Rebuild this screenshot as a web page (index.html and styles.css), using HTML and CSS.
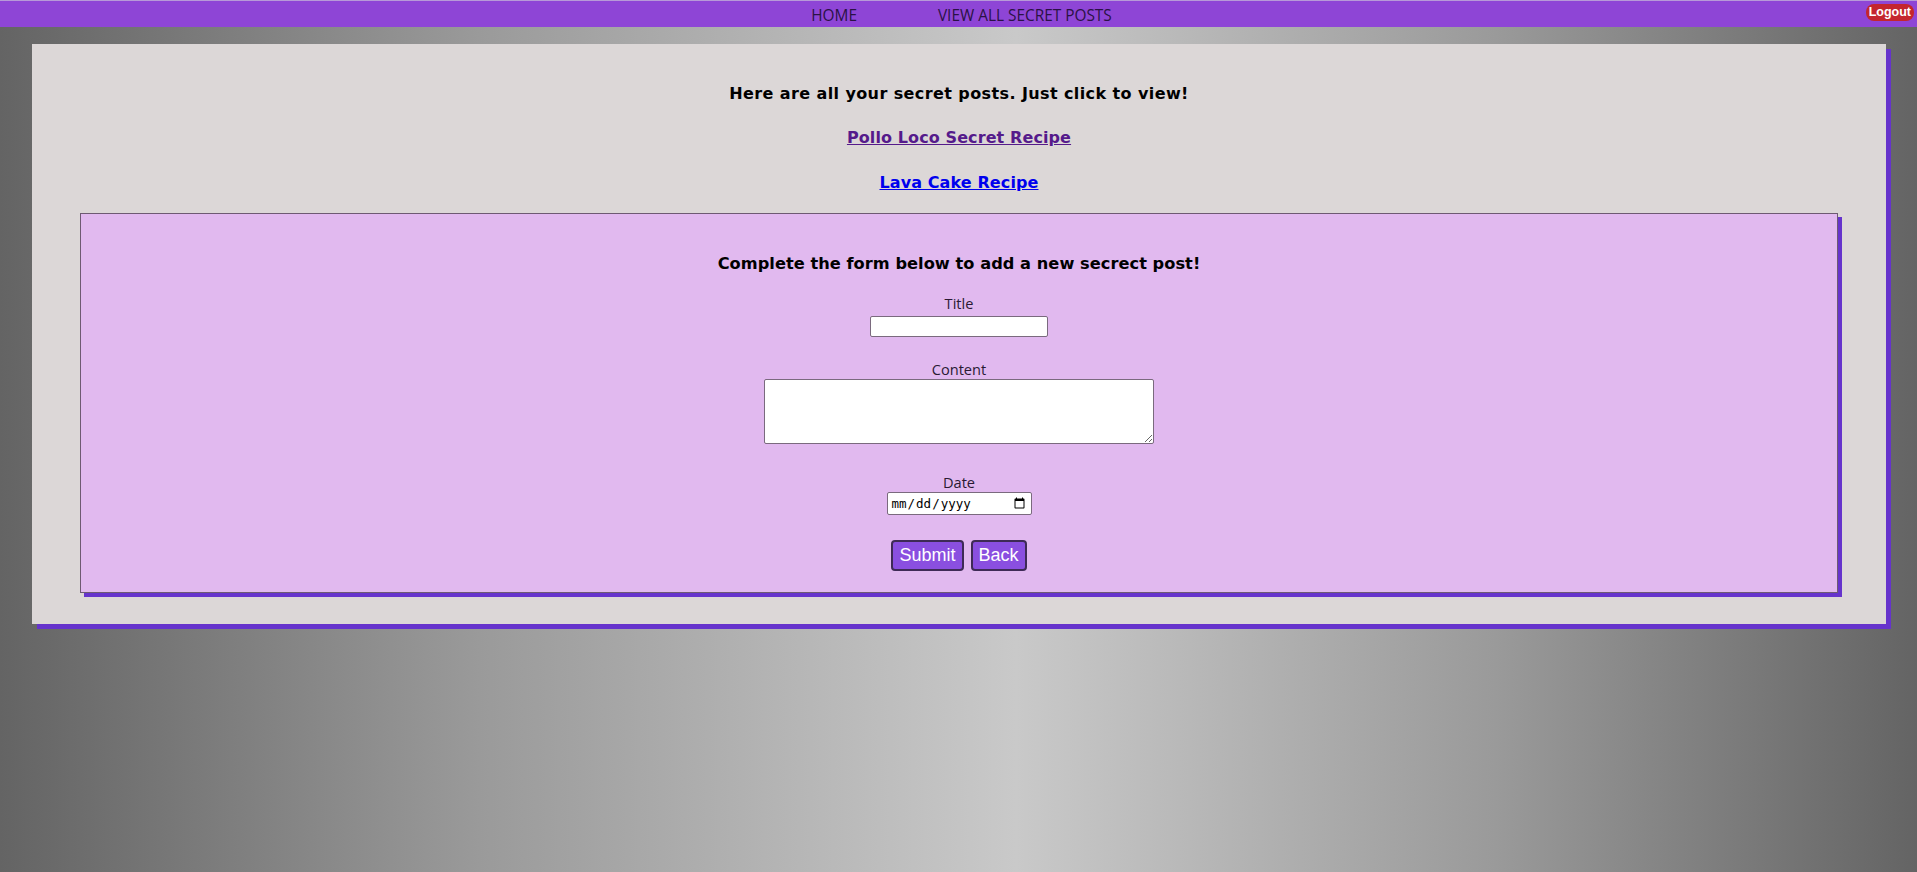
FILE: index.html
```html
<!DOCTYPE html>
<html lang="en">
<head>
<meta charset="utf-8">
<title>Secret Posts</title>
<link rel="stylesheet" href="styles.css">
</head>
<body>
<header class="topbar">
  <nav class="nav">
    <a class="nav-link" href="#">HOME</a>
    <a class="nav-link" href="#">VIEW ALL SECRET POSTS</a>
  </nav>
  <button class="logout" type="button">Logout</button>
</header>
<main class="card">
  <p class="heading">Here are all your secret posts. Just click to view!</p>
  <a class="post-link visited" href="#">Pollo Loco Secret Recipe</a>
  <a class="post-link" href="#">Lava Cake Recipe</a>
  <section class="form-box">
    <p class="heading form-heading">Complete the form below to add a new secrect post!</p>
    <form class="post-form">
      <label class="label label-title" for="title">Title</label>
      <input class="field title-field" id="title" type="text">
      <label class="label label-content" for="content">Content</label>
      <textarea class="field content-field" id="content"></textarea>
      <label class="label label-date" for="date">Date</label>
      <input class="field date-field" id="date" type="date">
      <div class="actions">
        <button class="btn" type="submit">Submit</button>
        <button class="btn" type="button">Back</button>
      </div>
    </form>
  </section>
</main>
</body>
</html>
```
FILE: styles.css
```css
html, body {
  margin: 0;
  padding: 0;
}
body {
  min-height: 872px;
  background: linear-gradient(to right, #646464 0%, #9a9a9a 25%, #c9c9c9 53%, #9a9a9a 78%, #646464 100%);
  font-family: "Open Sans", "Noto Sans", sans-serif;
}
.topbar {
  position: relative;
  height: 26px;
  background: #8e45d6;
  border-top: 1px solid #b79ad8;
}
.nav {
  display: flex;
  justify-content: center;
  align-items: center;
  gap: 81px;
  height: 26px;
  padding-left: 6px;
}
.nav-link {
  color: #2a1245;
  text-decoration: none;
  font-size: 15.4px;
  line-height: 26px;
  padding-top: 3px;
}
.logout {
  position: absolute;
  top: 3px;
  right: 3px;
  height: 17px;
  padding: 0 3px;
  border: none;
  border-radius: 8px;
  background: #c4262e;
  color: #ffffff;
  font-family: "Liberation Sans", Arial, sans-serif;
  font-weight: bold;
  font-size: 12.5px;
  line-height: 17px;
}
.card {
  display: flex;
  flex-direction: column;
  align-items: center;
  margin: 17px 31px 0 32px;
  padding: 40px 48px 31px;
  background: #dcd7d7;
  box-shadow: 5px 5px 0 #6633cc;
}
.heading {
  margin: 0;
  font-family: "DejaVu Sans", sans-serif;
  font-weight: bold;
  font-size: 16px;
  letter-spacing: 0.4px;
  line-height: 20px;
  color: #000000;
  text-align: center;
}
.post-link {
  margin-top: 24px;
  font-family: "DejaVu Sans", sans-serif;
  font-weight: bold;
  font-size: 16px;
  letter-spacing: 0.1px;
  line-height: 20px;
  color: #0000ee;
  text-decoration: underline;
}
.post-link + .post-link {
  margin-top: 25px;
}
.post-link.visited {
  color: #551a8b;
}
.form-box {
  align-self: stretch;
  margin-top: 20px;
  padding: 40px 0 21px;
  background: #e1b9ef;
  border: 1px solid #6e5a72;
  box-shadow: 4px 4px 0 #6633cc;
}
.form-heading {
  font-size: 16.2px;
  letter-spacing: 0.05px;
}
.post-form {
  display: flex;
  flex-direction: column;
  align-items: center;
}
.label {
  font-size: 14.6px;
  line-height: 20px;
  color: #2a1a33;
}
.label-title { margin-top: 19px; margin-bottom: 3px; }
.label-content { margin-top: 22px; }
.label-date { margin-top: 28px; }
.field {
  box-sizing: border-box;
  margin: 0;
  background: #ffffff;
  border: 1px solid #7a6a7e;
  border-radius: 2px;
}
.title-field {
  width: 178px;
  height: 21px;
}
.content-field {
  width: 390px;
  height: 65px;
  display: block;
}
.date-field {
  width: 145px;
  height: 23px;
  padding: 1px 3px;
  font-family: "DejaVu Sans Mono", "Liberation Mono", monospace;
  font-size: 12.5px;
  color: #000000;
}
.actions {
  display: flex;
  gap: 7px;
  margin-top: 25px;
}
.btn {
  height: 31px;
  padding: 0 6px;
  background: #8a4fe0;
  color: #ffffff;
  border: 2px solid #3e2a56;
  border-radius: 4px;
  font-family: "Liberation Sans", Arial, sans-serif;
  font-size: 18px;
  line-height: 27px;
}
```
